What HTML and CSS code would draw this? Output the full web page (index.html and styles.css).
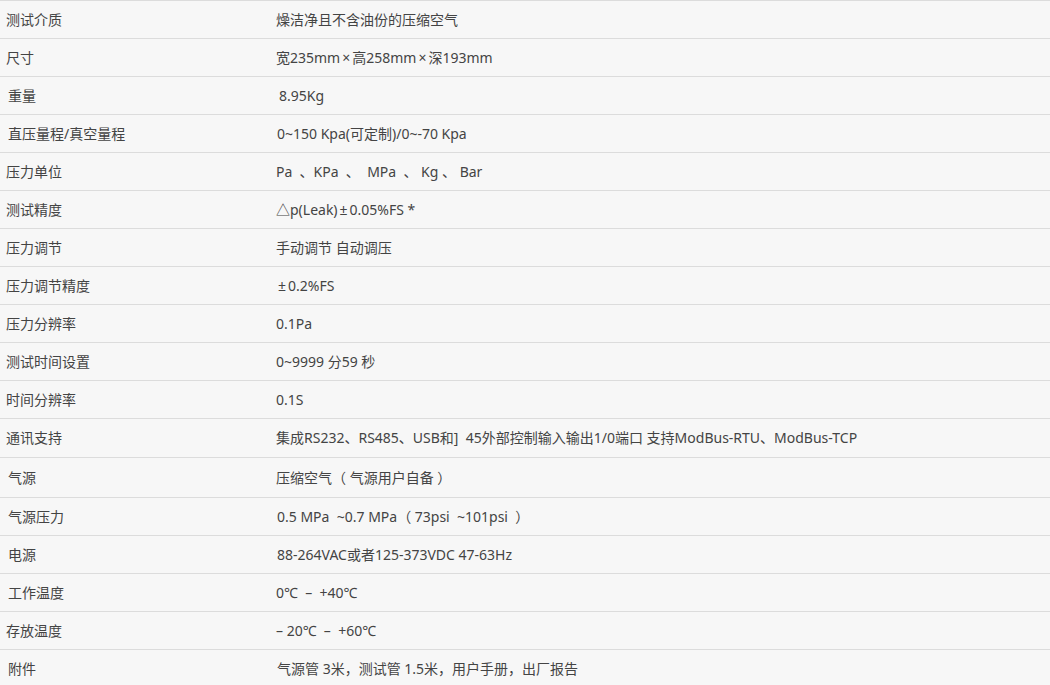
FILE: index.html
```html
<!DOCTYPE html>
<html lang="zh-CN">
  <head>
    <meta charset="UTF-8" />
    <meta name="viewport" content="width=device-width, initial-scale=1.0" />
    <title>技术参数</title>

    <link rel="stylesheet" href="styles.css">
  </head>
  <body>
    <table class="spec-table">
      <tbody>
        <tr>
          <td class="label">测试介质</td>
          <td class="value">燥洁净且不含油份的压缩空气</td>
        </tr>
        <tr>
          <td class="label">尺寸</td>
          <td class="value">宽235mm<span class="wide">×</span>高258mm<span class="wide">×</span>深193mm</td>
        </tr>
        <tr>
          <td class="label nudge">重量</td>
          <td class="value nudge-more">8.95Kg</td>
        </tr>
        <tr>
          <td class="label nudge">直压量程/真空量程</td>
          <td class="value nudge">0~150 Kpa(可定制)/0~-70 Kpa</td>
        </tr>
        <tr>
          <td class="label">压力单位</td>
          <td class="value">Pa &nbsp;、KPa &nbsp;、 &nbsp;MPa &nbsp;、 Kg 、 Bar</td>
        </tr>
        <tr>
          <td class="label">测试精度</td>
          <td class="value">△p(Leak)<span class="wide">±</span>0.05%FS *</td>
        </tr>
        <tr>
          <td class="label">压力调节</td>
          <td class="value">手动调节 自动调压</td>
        </tr>
        <tr>
          <td class="label">压力调节精度</td>
          <td class="value"><span class="wide">±</span>0.2%FS</td>
        </tr>
        <tr>
          <td class="label">压力分辨率</td>
          <td class="value">0.1Pa</td>
        </tr>
        <tr>
          <td class="label">测试时间设置</td>
          <td class="value">0~9999 分59 秒</td>
        </tr>
        <tr>
          <td class="label">时间分辨率</td>
          <td class="value">0.1S</td>
        </tr>
        <tr class="row-tall">
          <td class="label">通讯支持</td>
          <td class="value">集成RS232、RS485、USB和]&nbsp; 45外部控制输入输出1/0端口 支持ModBus-RTU、ModBus-TCP</td>
        </tr>
        <tr class="row-taller">
          <td class="label nudge">气源</td>
          <td class="value">压缩空气（ 气源用户自备 ）</td>
        </tr>
        <tr>
          <td class="label nudge">气源压力</td>
          <td class="value nudge">0.5 MPa &nbsp;~0.7 MPa（ 73psi &nbsp;~101psi &nbsp;）</td>
        </tr>
        <tr>
          <td class="label nudge">电源</td>
          <td class="value nudge">88-264VAC或者125-373VDC 47-63Hz</td>
        </tr>
        <tr>
          <td class="label nudge">工作温度</td>
          <td class="value">0℃ &nbsp;– &nbsp;+40℃</td>
        </tr>
        <tr>
          <td class="label">存放温度</td>
          <td class="value">– 20℃ &nbsp;– &nbsp;+60℃</td>
        </tr>
        <tr>
          <td class="label nudge">附件</td>
          <td class="value nudge">气源管 3米，测试管 1.5米，用户手册，出厂报告</td>
        </tr>
      </tbody>
    </table>
  </body>
</html>
```

FILE: styles.css
```css
body {
  margin: 0;
  background-color: #f7f7f7;
  font-family: "Noto Sans", "Noto Sans CJK SC", sans-serif;
  font-size: 14px;
  color: #444;
}

.spec-table {
  width: 1050px;
  border-collapse: collapse;
  border-top: 1px solid #dcdcdc;
}

.spec-table tr {
  border-bottom: 1px solid #dcdcdc;
}

.spec-table td {
  height: 37px;
  padding: 0;
  vertical-align: middle;
  white-space: nowrap;
  line-height: 20px;
}

.spec-table .row-tall td {
  height: 38px;
}

.spec-table .row-taller td {
  height: 39px;
}

.label {
  width: 268px;
  padding-left: 6px !important;
}

.value {
  padding-left: 0 !important;
}

.label.nudge {
  padding-left: 8px !important;
}

.value.nudge {
  padding-left: 1px !important;
}

.value.nudge-more {
  padding-left: 3px !important;
}

.wide {
  display: inline-block;
  margin: 0 2px;
}
```
